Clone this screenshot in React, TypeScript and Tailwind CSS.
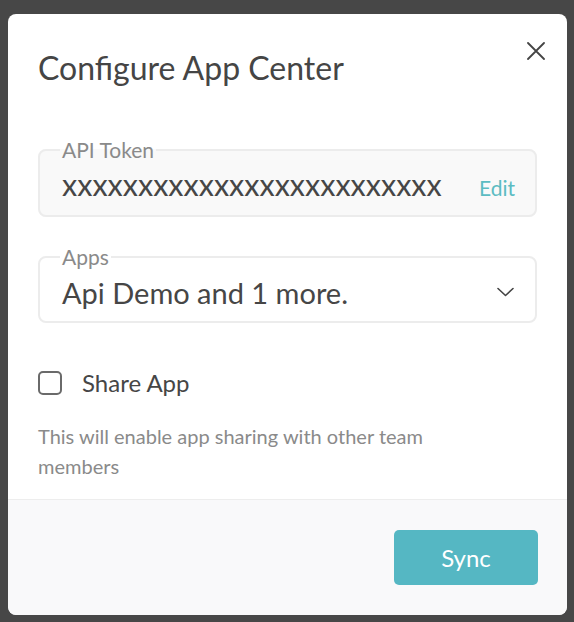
import React from 'react';

export default function App() {
  return (
    <div className="min-h-[622px] bg-[#474747] pl-[8px] pt-[14px] font-['Lato','Liberation_Sans',sans-serif]">
      <div className="flex h-[601px] w-[559px] flex-col overflow-hidden rounded-[8px] bg-white">
        <div className="relative flex-1 px-[30px] pt-[35px]">
          <button className="absolute right-[22px] top-[28px] flex h-[18px] w-[18px] items-center justify-center text-[#444]">
            <svg width="18" height="18" viewBox="0 0 18 18" fill="none" stroke="currentColor" strokeWidth="1.8" strokeLinecap="round">
              <path d="M1 1L17 17M17 1L1 17" />
            </svg>
          </button>
          <h1 className="text-[32px] leading-[38px] text-[#454545]">Configure App Center</h1>

          <fieldset className="mt-[51px] flex h-[79px] items-center rounded-[8px] border-2 border-[#ececec] bg-[#f9f9f9] pl-[22px] pr-[20px]">
            <legend className="ml-[-2px] px-[2px] text-[21px] leading-[24px] text-[#8a8a8a]">API Token</legend>
            <div className="flex w-full items-baseline justify-between pb-[8px]">
              <span className="text-[30.5px] leading-[37px] text-[#464646]">xxxxxxxxxxxxxxxxxxxxxxxxx</span>
              <span className="text-[21px] text-[#5cbcc2]">Edit</span>
            </div>
          </fieldset>

          <fieldset className="mt-[28px] flex h-[78px] items-center rounded-[8px] border-2 border-[#ececec] bg-white pl-[22px] pr-[21px]">
            <legend className="ml-[-2px] px-[2px] text-[21px] leading-[24px] text-[#8a8a8a]">Apps</legend>
            <div className="flex w-full items-center justify-between pb-[6px]">
              <span className="text-[29px] leading-[35px] text-[#464646]">Api Demo and 1 more.</span>
              <svg width="17" height="10" viewBox="0 0 17 10" fill="none" stroke="#444" strokeWidth="1.6" strokeLinecap="round" strokeLinejoin="round">
                <path d="M1 1.5L8.5 8.5L16 1.5" />
              </svg>
            </div>
          </fieldset>

          <label className="mt-[45px] flex items-center gap-[20px]">
            <span className="h-[24px] w-[24px] rounded-[5px] border-2 border-[#6a6a6a] bg-white" />
            <span className="text-[24px] leading-[29px] text-[#464646]">Share App</span>
          </label>

          <p className="mt-[24px] max-w-[450px] text-[20px] leading-[30px] text-[#8a8a8a]">
            This will enable app sharing with other team members
          </p>
        </div>

        <div className="flex h-[116px] items-center justify-end rounded-b-[8px] border-t border-[#ededed] bg-[#f9f9fa] px-[29px]">
          <button className="h-[55px] w-[144px] rounded-[5px] bg-[#55b7c3] text-[24px] text-white">Sync</button>
        </div>
      </div>
    </div>
  );
}
